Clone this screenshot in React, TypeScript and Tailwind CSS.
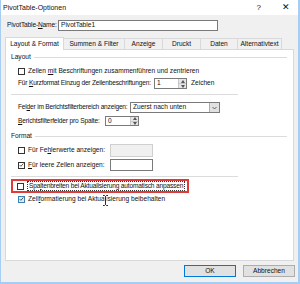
import React from 'react'

const font = { fontFamily: '"Liberation Sans", Arial, sans-serif' }

function Check({ checked = false, hover = false }: { checked?: boolean; hover?: boolean }) {
  return (
    <span
      className={`flex h-[7px] w-[7px] shrink-0 items-center justify-center border ${
        hover ? 'border-[#3c7fb1] bg-[#dcecfc]' : 'border-[#333] bg-white'
      }`}
    >
      {checked && (
        <svg width="6" height="6" viewBox="0 0 6 6">
          <path d="M0.8 3.1 L2.3 4.6 L5.2 1.2" fill="none" stroke="#222" strokeWidth="0.9" />
        </svg>
      )}
    </span>
  )
}

function Spinner({ value, width }: { value: string; width: string }) {
  return (
    <div className={`flex h-full shrink-0 ${width} border border-[#7a7a7a] bg-white`}>
      <span className="flex flex-1 items-center pl-[2px]">{value}</span>
      <div className="flex w-[8px] flex-col border-l border-[#c8c8c8] bg-[#e6e6e6]">
        <span className="flex flex-1 items-center justify-center border-b border-[#c8c8c8]">
          <svg width="4" height="3" viewBox="0 0 4 3"><path d="M0 3 L2 0 L4 3Z" fill="#555" /></svg>
        </span>
        <span className="flex flex-1 items-center justify-center">
          <svg width="4" height="3" viewBox="0 0 4 3"><path d="M0 0 L2 3 L4 0Z" fill="#555" /></svg>
        </span>
      </div>
    </div>
  )
}

function GroupHeader({ label, className }: { label: string; className: string }) {
  return (
    <div className={`flex h-[10px] items-center gap-[3px] ${className}`}>
      <span>{label}</span>
      <span className="mr-[6px] h-px flex-1 bg-[#dcdcdc]" />
    </div>
  )
}

const tabs = ['Summen & Filter', 'Anzeige', 'Druckt', 'Daten', 'Alternativtext']
const tabWidths = ['w-[61px]', 'w-[38px]', 'w-[38px]', 'w-[37px]', 'w-[44px]']

export default function App() {
  return (
    <div
      className="relative flex h-[284px] w-[300px] flex-col overflow-hidden whitespace-nowrap border-b-2 border-l border-r-2 border-[#a8cdf2] bg-[#f0f0f0] text-[6.6px] leading-none text-[#111]"
      style={font}
    >
      {/* Title bar */}
      <div className="flex h-[15px] shrink-0 items-center bg-white pl-[2px] text-[7px]">
        <span className="flex-1">PivotTable-Optionen</span>
        <span className="mr-[21px] text-[8px]">?</span>
        <span className="mr-[8px] text-[9px] font-light">✕</span>
      </div>

      {/* Name row */}
      <div className="mt-[5px] flex h-[10px] items-center pl-[6px]">
        <span className="w-[51px] tracking-[-0.15px]">
          PivotTable-<span className="underline">N</span>ame:
        </span>
        <div className="flex h-[11px] w-[160px] items-center border border-[#7a7a7a] bg-white pl-[2px]">
          PivotTable1
        </div>
      </div>

      {/* Tabs */}
      <div className="mt-[6px] flex h-[13px] items-end pl-[4px]">
        <div className="relative z-10 -mb-px flex h-[13px] w-[59px] items-center justify-center border border-b-0 border-[#d9d9d9] bg-white">
          Layout &amp; Format
        </div>
        {tabs.map((t, i) => (
          <div
            key={t}
            className={`flex h-[11px] ${tabWidths[i]} items-center justify-center border border-l-0 border-b-0 border-[#d9d9d9] bg-[#f0f0f0]`}
          >
            {t}
          </div>
        ))}
      </div>

      {/* Panel */}
      <div className="relative mx-[4px] flex h-[212px] flex-col border border-[#d9d9d9] bg-white pl-[5px]">
        <GroupHeader label="Layout" className="mt-[2px]" />
        <div className="mt-[4px] flex h-[10px] items-center gap-[3px] pl-[7px]">
          <Check />
          <span>
            Zellen <span className="underline">m</span>it Beschriftungen zusammenführen und zentrieren
          </span>
        </div>
        <div className="mt-[2px] flex h-[11px] items-center pl-[7px]">
          <span className="w-[136px] tracking-[-0.2px]">
            Für <span className="underline">K</span>urzformat Einzug der Zeilenbeschriftungen:
          </span>
          <Spinner value="1" width="w-[33px]" />
          <span className="ml-[4px]">Zeichen</span>
        </div>
        <div className="mt-[5px] h-px w-[227px] bg-[#dcdcdc]" />
        <div className="mt-[7px] flex h-[11px] items-center pl-[7px]">
          <span className="w-[112px] tracking-[-0.2px]">
            Fel<span className="underline">d</span>er im Berichtsfilterbereich anzeigen:
          </span>
          <div className="flex h-full w-[90px] border border-[#7a7a7a] bg-white">
            <span className="flex flex-1 items-center pl-[2px]">Zuerst nach unten</span>
            <span className="flex w-[10px] items-center justify-center border-l border-[#adadad] bg-[#e1e1e1]">
              <svg width="5" height="4" viewBox="0 0 5 4">
                <path d="M0.5 1 L2.5 3 L4.5 1" fill="none" stroke="#444" strokeWidth="0.8" />
              </svg>
            </span>
          </div>
        </div>
        <div className="mt-[3px] flex h-[10px] items-center pl-[7px]">
          <span className="w-[87px] tracking-[-0.15px]">
            <span className="underline">B</span>erichtsfilterfelder pro Spalte:
          </span>
          <Spinner value="0" width="w-[34px]" />
        </div>
        <GroupHeader label="Format" className="mt-[5px]" />
        <div className="mt-[3px] flex h-[13px] items-center gap-[3px] pl-[7px]">
          <Check />
          <span className="w-[79px]">
            Für Fe<span className="underline">h</span>lerwerte anzeigen:
          </span>
          <div className="h-full w-[43px] border border-[#cfcfcf] bg-[#f0f0f0]" />
        </div>
        <div className="mt-[2px] flex h-[12px] items-center gap-[3px] pl-[7px]">
          <Check checked />
          <span className="w-[79px]">
            <span className="underline">F</span>ür leere Zellen anzeigen:
          </span>
          <div className="h-full w-[43px] border border-[#7a7a7a] bg-white" />
        </div>
        <div className="mt-[5px] h-px w-[227px] bg-[#dcdcdc]" />
        <div className="mt-[2px] flex h-[14px] w-[178px] items-center gap-[3px] border-2 border-[#e03a3a] pl-[4px]">
          <Check />
          <span className="border border-dotted border-[#333] px-px leading-[8px] tracking-[-0.18px]">
            Spa<span className="underline">l</span>tenbreiten bei Aktualisierung automatisch anpassen
          </span>
        </div>
        <div className="mt-px flex h-[10px] items-center gap-[3px] pl-[7px]">
          <Check checked hover />
          <span>
            Zell<span className="underline">f</span>ormatierung bei Aktualisierung beibehalten
          </span>
        </div>

        {/* I-beam cursor */}
        <svg className="absolute left-[96px] top-[145px]" width="7" height="11" viewBox="0 0 7 11">
          <path
            d="M1 0.5 H2.5 L3.5 1.5 L4.5 0.5 H6 M3.5 1.5 V9.5 M1 10.5 H2.5 L3.5 9.5 L4.5 10.5 H6"
            fill="none"
            stroke="#fff"
            strokeWidth="2"
          />
          <path
            d="M1 0.5 H2.5 L3.5 1.5 L4.5 0.5 H6 M3.5 1.5 V9.5 M1 10.5 H2.5 L3.5 9.5 L4.5 10.5 H6"
            fill="none"
            stroke="#111"
            strokeWidth="0.9"
          />
        </svg>
      </div>

      {/* Buttons */}
      <div className="mt-[4px] flex justify-end gap-[7px] pr-[3px]">
        <button className="flex h-[12px] w-[52px] items-center justify-center border border-[#0078d7] bg-[#e1e1e1]">
          OK
        </button>
        <button className="flex h-[12px] w-[52px] items-center justify-center border border-[#adadad] bg-[#e1e1e1]">
          Abbrechen
        </button>
      </div>
    </div>
  )
}
